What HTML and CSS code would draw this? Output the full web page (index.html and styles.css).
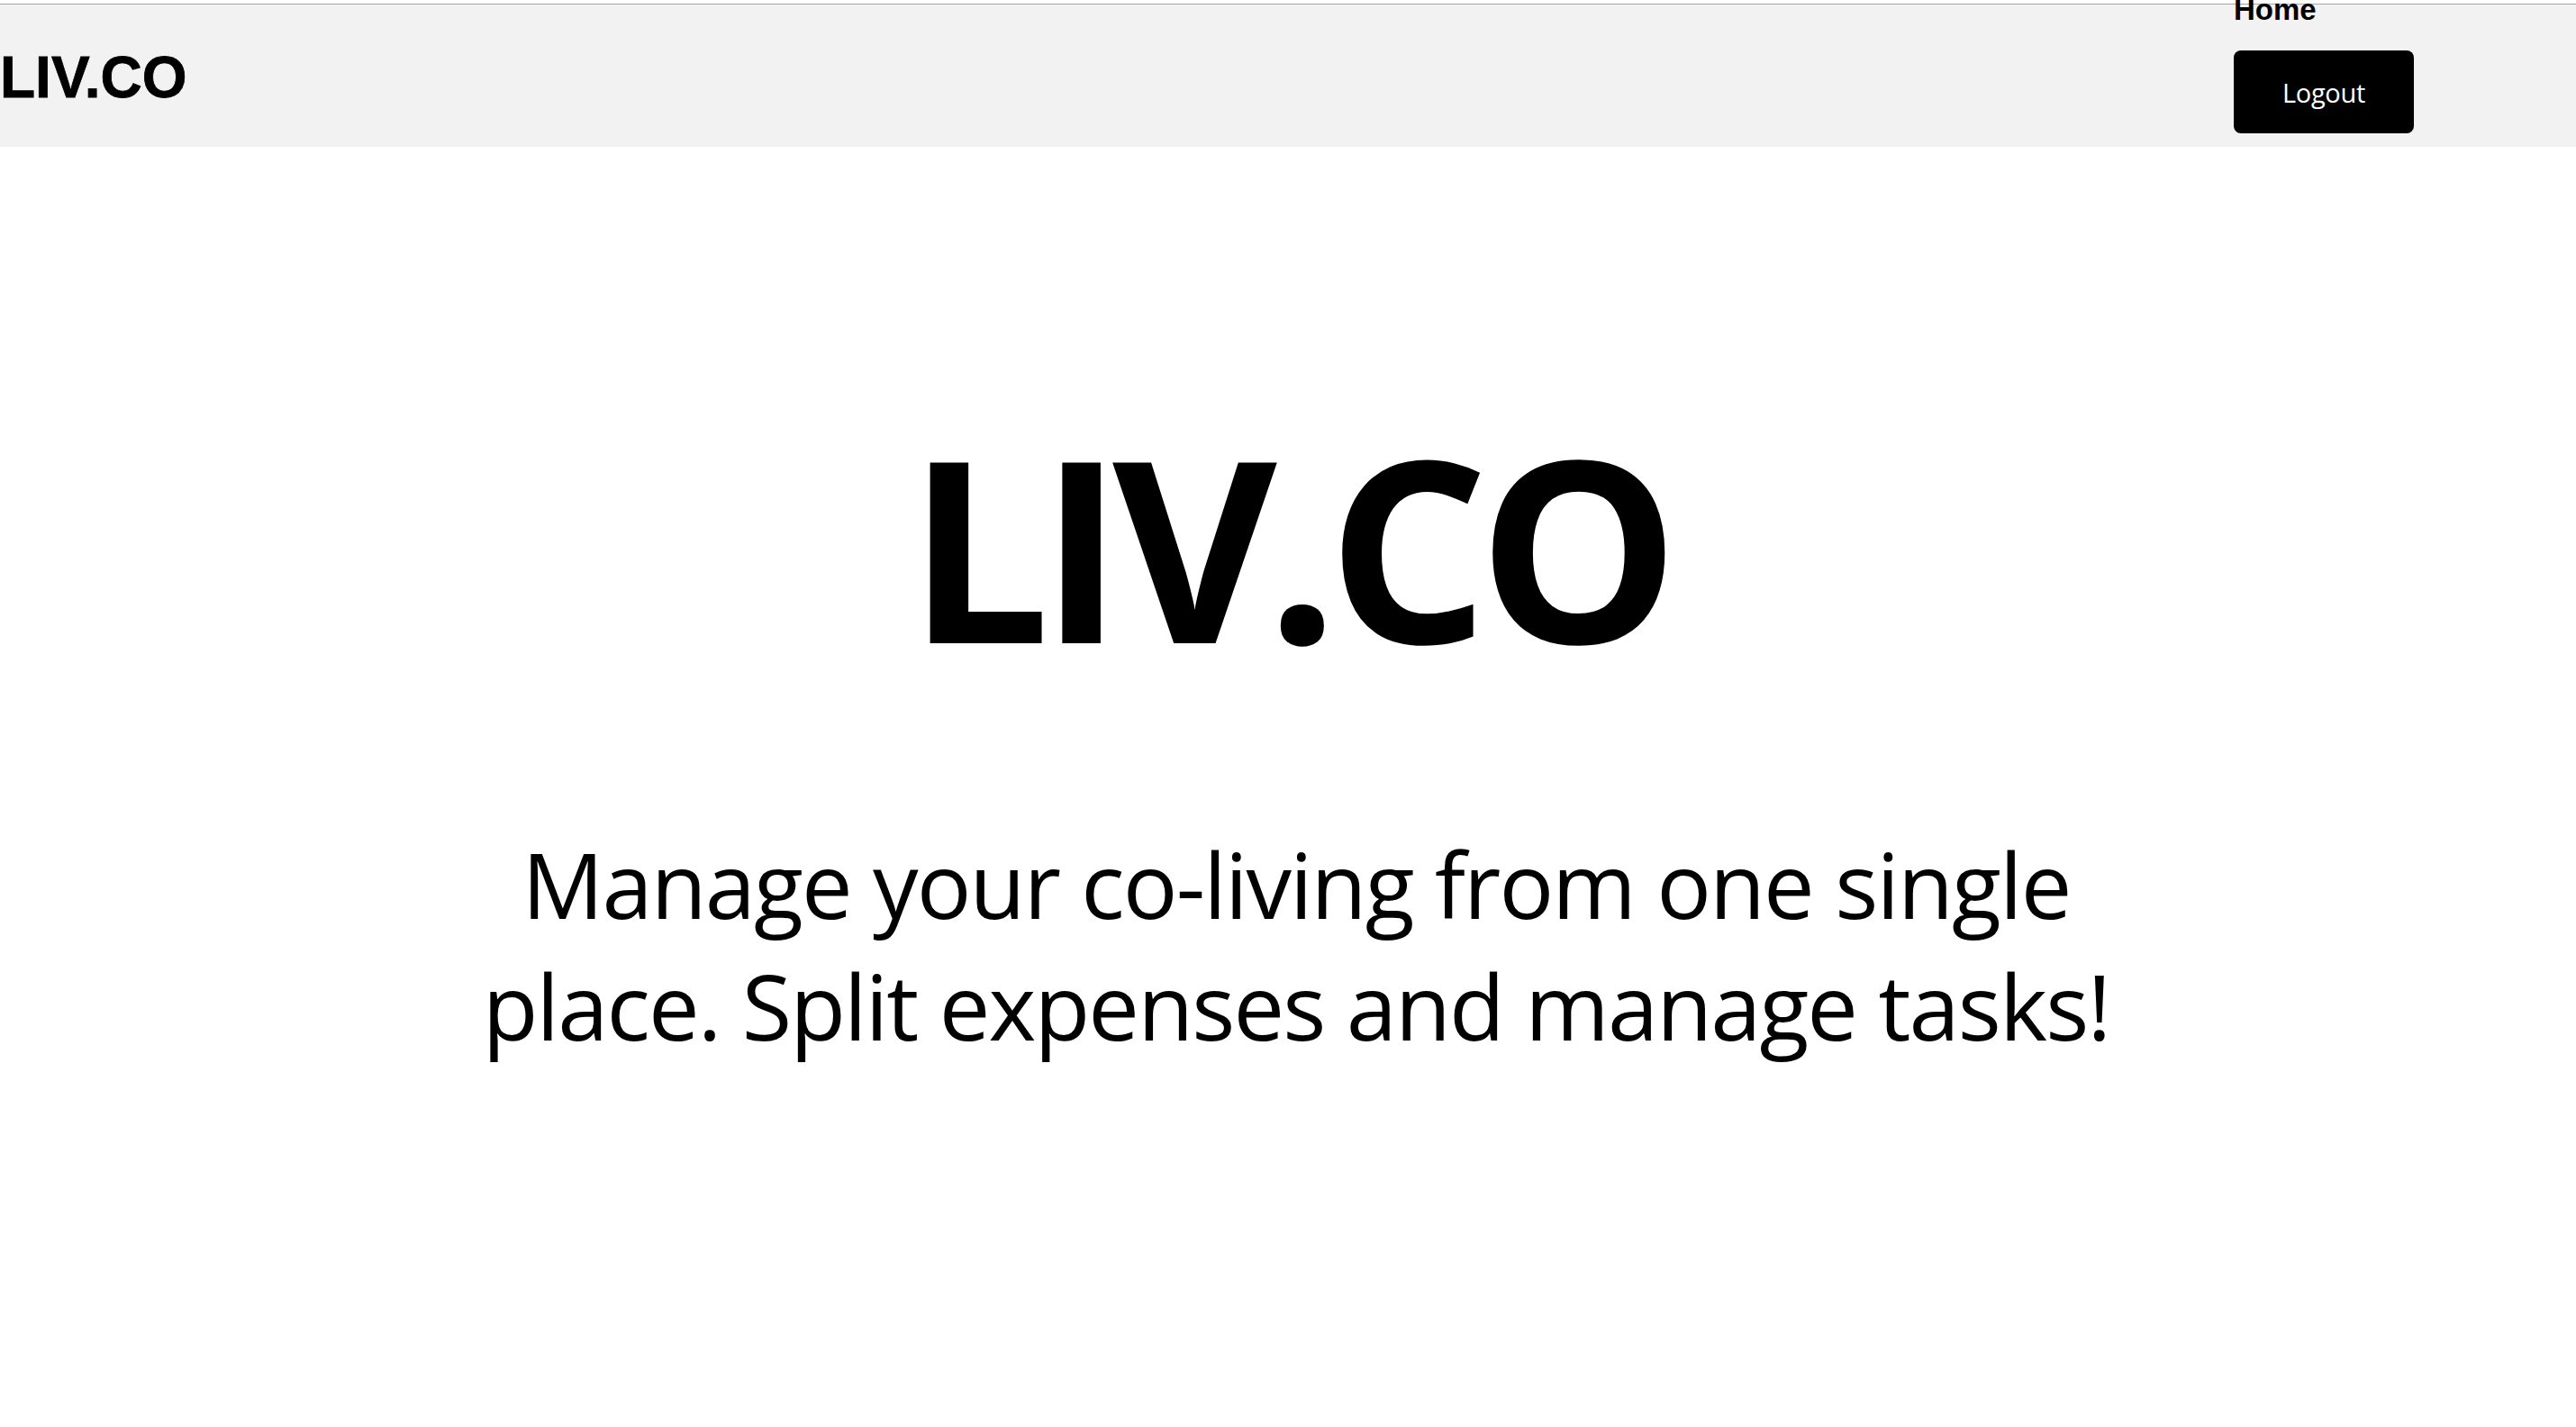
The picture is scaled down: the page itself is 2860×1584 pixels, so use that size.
FILE: index.html
```html
<!DOCTYPE html>
<html lang="en">
<head>
<meta charset="utf-8">
<title>LIV.CO</title>
<link rel="stylesheet" href="styles.css">
</head>
<body>
<header class="topbar">
  <div class="brand">LIV.CO</div>
  <nav class="nav">
    <a class="nav-link" href="#">Home</a>
    <button class="logout" type="button">Logout</button>
  </nav>
</header>
<main class="hero">
  <h1 class="hero-title">LIV.CO</h1>
  <p class="hero-text">Manage your co-living from one single place. Split expenses and manage tasks!</p>
</main>
</body>
</html>
```
FILE: styles.css
```css
html, body {
  margin: 0;
  padding: 0;
  background: #ffffff;
}

body {
  font-family: "Open Sans", "Noto Sans", sans-serif;
  color: #000;
}

.topbar {
  margin-top: 4px;
  border-top: 1px solid #a6a6a6;
  height: 158px;
  background: #f2f2f2;
  display: flex;
  justify-content: space-between;
  align-items: center;
  padding: 0 180px 0 0;
}

.brand {
  font-family: "Liberation Sans", Arial, sans-serif;
  font-weight: 700;
  font-size: 64px;
  line-height: 1;
  margin-top: 4px;
  -webkit-text-stroke: 0.8px #000;
}

.nav {
  align-self: flex-end;
  display: flex;
  flex-direction: column;
  align-items: flex-start;
  padding-bottom: 15px;
}

.nav-link {
  font-family: "Liberation Sans", Arial, sans-serif;
  font-weight: 700;
  font-size: 33px;
  line-height: 38px;
  color: #000;
  text-decoration: none;
  margin-bottom: 26px;
}

.logout {
  width: 200px;
  height: 92px;
  background: #000;
  color: #fff;
  border: none;
  border-radius: 8px;
  font-family: "Open Sans", "Noto Sans", sans-serif;
  font-size: 29px;
  letter-spacing: -0.3px;
  padding: 0;
  display: flex;
  align-items: center;
  justify-content: center;
}

.hero {
  padding-top: 302px;
  display: flex;
  flex-direction: column;
  align-items: center;
  text-align: center;
}

.hero-title {
  margin: 0 0 168px;
  font-family: "Open Sans", "Noto Sans", sans-serif;
  font-weight: 700;
  font-size: 281px;
  line-height: 281px;
  letter-spacing: -12px;
}

.hero-text {
  margin: 0;
  padding-left: 18px;
  max-width: 1900px;
  font-size: 101px;
  line-height: 135px;
  letter-spacing: -1.9px;
}
```
